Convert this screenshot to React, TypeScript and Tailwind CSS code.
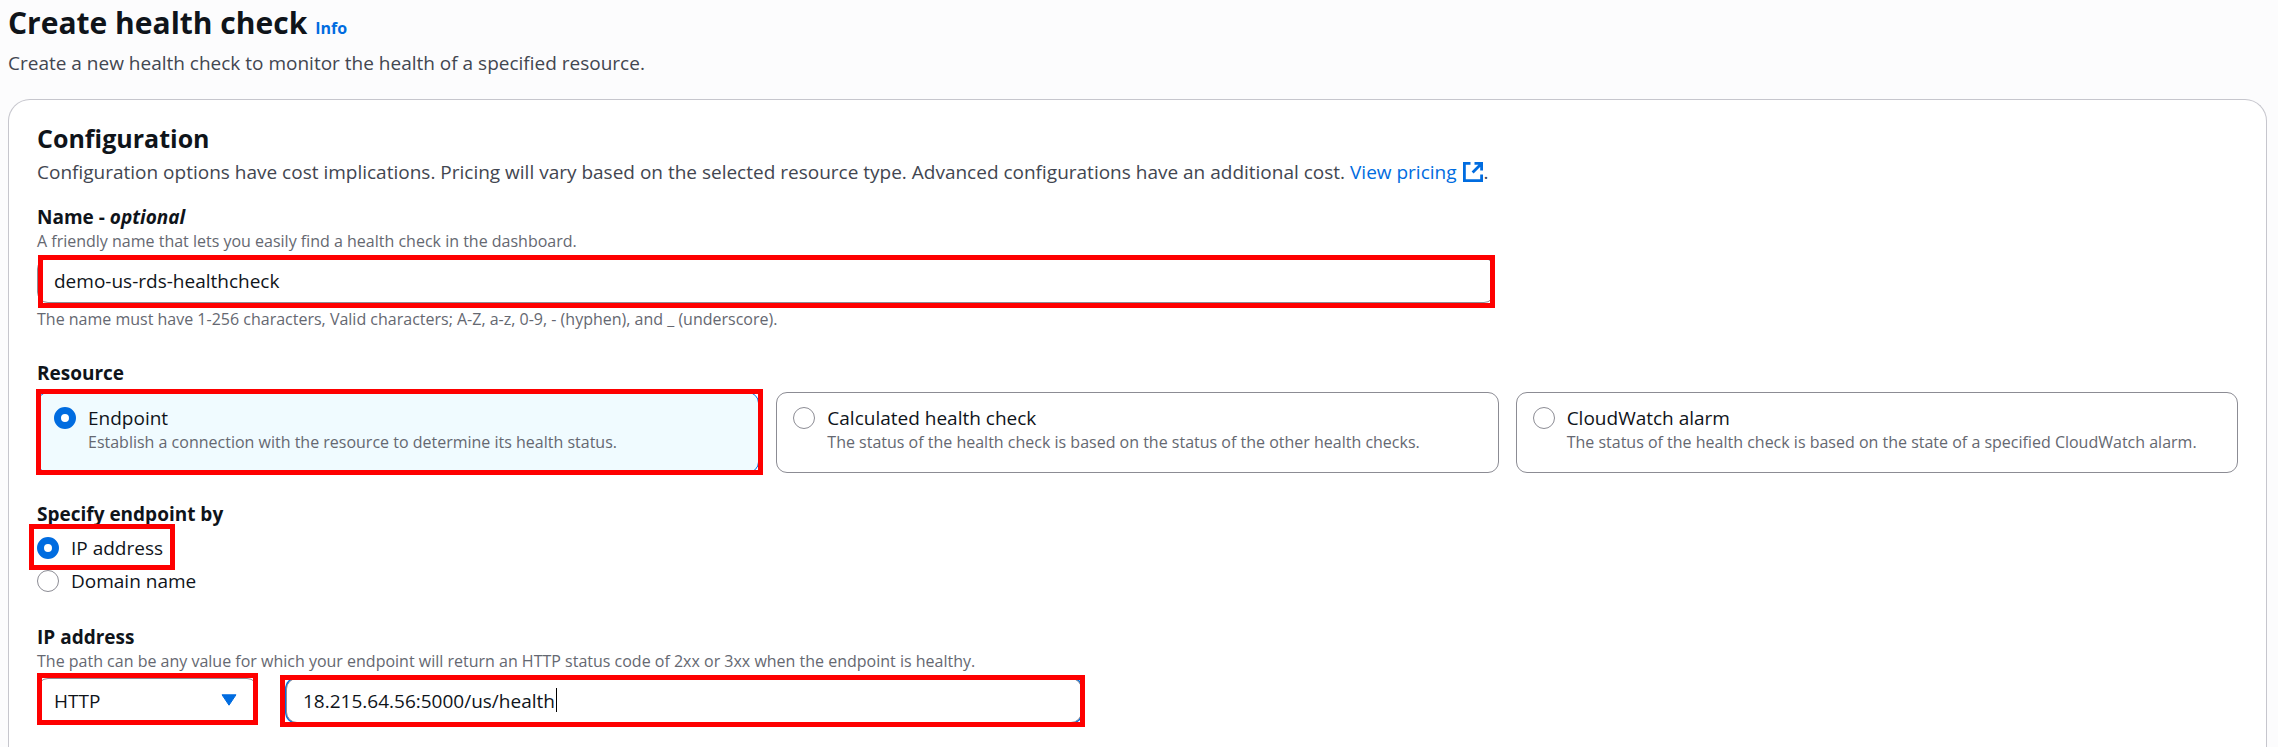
import type { ReactNode } from 'react'

const resources = [
  {
    id: 'endpoint',
    title: 'Endpoint',
    description: 'Establish a connection with the resource to determine its health status.',
    selected: true,
  },
  {
    id: 'calculated',
    title: 'Calculated health check',
    description: 'The status of the health check is based on the status of the other health checks.',
    selected: false,
  },
  {
    id: 'cloudwatch',
    title: 'CloudWatch alarm',
    description: 'The status of the health check is based on the state of a specified CloudWatch alarm.',
    selected: false,
  },
]

const radioClass =
  'appearance-none shrink-0 size-[22px] rounded-full border border-[#8c8c94] bg-white checked:border-[7px] checked:border-[#006ce0]'
const labelClass = 'block text-[19px] leading-[26px] font-bold'
const hintClass = 'text-base leading-[22px] text-[#656871]'
const fieldClass =
  'block w-full h-[45px] rounded-[11px] border border-[#8c8c94] bg-white px-4 text-[19px] outline-none'

// red callout frame drawn over the thing it wraps
function Highlight({ className }: { className: string }) {
  return <span aria-hidden="true" className={`pointer-events-none absolute border-5 border-[#fe0000] ${className}`} />
}

function Hint({ id, children }: { id?: string; children: ReactNode }) {
  return (
    <p id={id} className={hintClass}>
      {children}
    </p>
  )
}

function ExternalIcon() {
  return (
    <svg
      viewBox="0 0 20 20"
      className="inline-block ml-[2px] size-5 align-[-3px]"
      fill="none"
      stroke="currentColor"
      strokeWidth="2.8"
      aria-hidden="true"
    >
      <path d="M7.5 1.4H1.4v17.2h17.2v-6.1" />
      <path d="M11.5 1.4h7.1v7.1M18.6 1.4l-9 9" />
    </svg>
  )
}

export default function App() {
  return (
    <main className="min-h-screen flex flex-col bg-[#fcfcfd] pl-2 pr-[11px] pt-1 text-[19px] leading-7 text-[#0f141a] font-['Open_Sans',sans-serif]">
      <header className="text-[#424650]">
        <div className="flex items-baseline gap-2">
          <h1 className="text-3xl leading-[38px] font-bold text-[#0f141a]">Create health check</h1>
          <a href="#info" className="text-base leading-[22px] font-bold text-[#006ce0]">
            Info
          </a>
        </div>
        <p className="mt-[7px]">Create a new health check to monitor the health of a specified resource.</p>
      </header>

      <form className="mt-[22px] flex-1 rounded-t-[22px] border border-b-0 border-[#c6c6cd] bg-white px-7 pt-[22px]">
        <h2 className="text-[25px] leading-8 font-bold">Configuration</h2>
        <p className="mt-1 text-[#424650]">
          Configuration options have cost implications. Pricing will vary based on the selected resource type.
          Advanced configurations have an additional cost.{' '}
          <a href="#pricing" className="text-[#006ce0]">
            View pricing <ExternalIcon />
          </a>
          .
        </p>

        <div className="mt-[18px]">
          <label htmlFor="name" className={labelClass}>
            Name - <i>optional</i>
          </label>
          <Hint>A friendly name that lets you easily find a health check in the dashboard.</Hint>
          <div className="relative mt-[6px] mb-[5px] max-w-[1458px]">
            <input id="name" type="text" defaultValue="demo-us-rds-healthcheck" className={fieldClass} />
            <Highlight className="-top-[3px] -bottom-[5px] left-px right-0" />
          </div>
          <Hint>
            The name must have 1-256 characters, Valid characters; A-Z, a-z, 0-9, - (hyphen), and _ (underscore).
          </Hint>
        </div>

        <fieldset className="mt-[30px]">
          <legend className={labelClass}>Resource</legend>
          <div className="mt-[6px] grid grid-cols-3 gap-[17px]">
            {resources.map((r) => (
              <div
                key={r.id}
                className={`relative flex gap-3 rounded-[11px] border px-4 pt-3 pb-[19px] ${
                  r.selected ? 'border-[#006ce0] bg-[#f0fbff]' : 'border-[#8c8c94]'
                }`}
              >
                <input
                  id={r.id}
                  type="radio"
                  name="resource"
                  defaultChecked={r.selected}
                  className={`${radioClass} mt-[2px]`}
                />
                <label htmlFor={r.id}>
                  <span className="block leading-[26px]">{r.title}</span>
                  <span className={`block ${hintClass}`}>{r.description}</span>
                </label>
                {r.selected && <Highlight className="-top-1 -bottom-[3px] -left-[2px] -right-[5px]" />}
              </div>
            ))}
          </div>
        </fieldset>

        <fieldset className="mt-7">
          <legend className={labelClass}>Specify endpoint by</legend>
          <div className="mt-2 flex flex-col items-start gap-[7px] leading-[26px]">
            <div className="relative flex items-center gap-3">
              <input id="by-ip" type="radio" name="endpoint-by" defaultChecked className={radioClass} />
              <label htmlFor="by-ip">IP address</label>
              <Highlight className="-top-[11px] -bottom-[9px] -left-2 -right-3" />
            </div>
            <div className="flex items-center gap-3">
              <input id="by-domain" type="radio" name="endpoint-by" className={radioClass} />
              <label htmlFor="by-domain">Domain name</label>
            </div>
          </div>
        </fieldset>

        <div className="mt-[30px]">
          <label htmlFor="address" className={labelClass}>
            IP address
          </label>
          <Hint id="address-hint">
            The path can be any value for which your endpoint will return an HTTP status code of 2xx or 3xx when the
            endpoint is healthy.
          </Hint>
          <div className="mt-[6px] flex gap-7">
            <div className="relative w-[221px] shrink-0">
              <select aria-label="Protocol" defaultValue="HTTP" className={`${fieldClass} appearance-none`}>
                <option>HTTP</option>
                <option>HTTPS</option>
                <option>TCP</option>
              </select>
              <svg
                viewBox="0 0 16 12"
                className="pointer-events-none absolute top-4 right-[21px] w-4 h-3"
                fill="#006ce0"
                stroke="#006ce0"
                strokeLinejoin="round"
                aria-hidden="true"
              >
                <path d="M1 .8h14L8 11.2z" />
              </svg>
              <Highlight className="-top-[5px] -bottom-[2px] left-0 right-0" />
            </div>
            <div className="relative flex-1 max-w-[796px]">
              <input
                id="address"
                type="text"
                aria-describedby="address-hint"
                defaultValue="18.215.64.56:5000/us/health"
                className={`${fieldClass} ring-1 ring-[#006ce0] caret-transparent`}
              />
              <span aria-hidden="true" className="absolute top-[10px] left-[270px] w-px h-6 bg-black" />
              <Highlight className="-top-[3px] -bottom-1 -left-[6px] -right-[3px]" />
            </div>
          </div>
        </div>
      </form>
    </main>
  )
}
